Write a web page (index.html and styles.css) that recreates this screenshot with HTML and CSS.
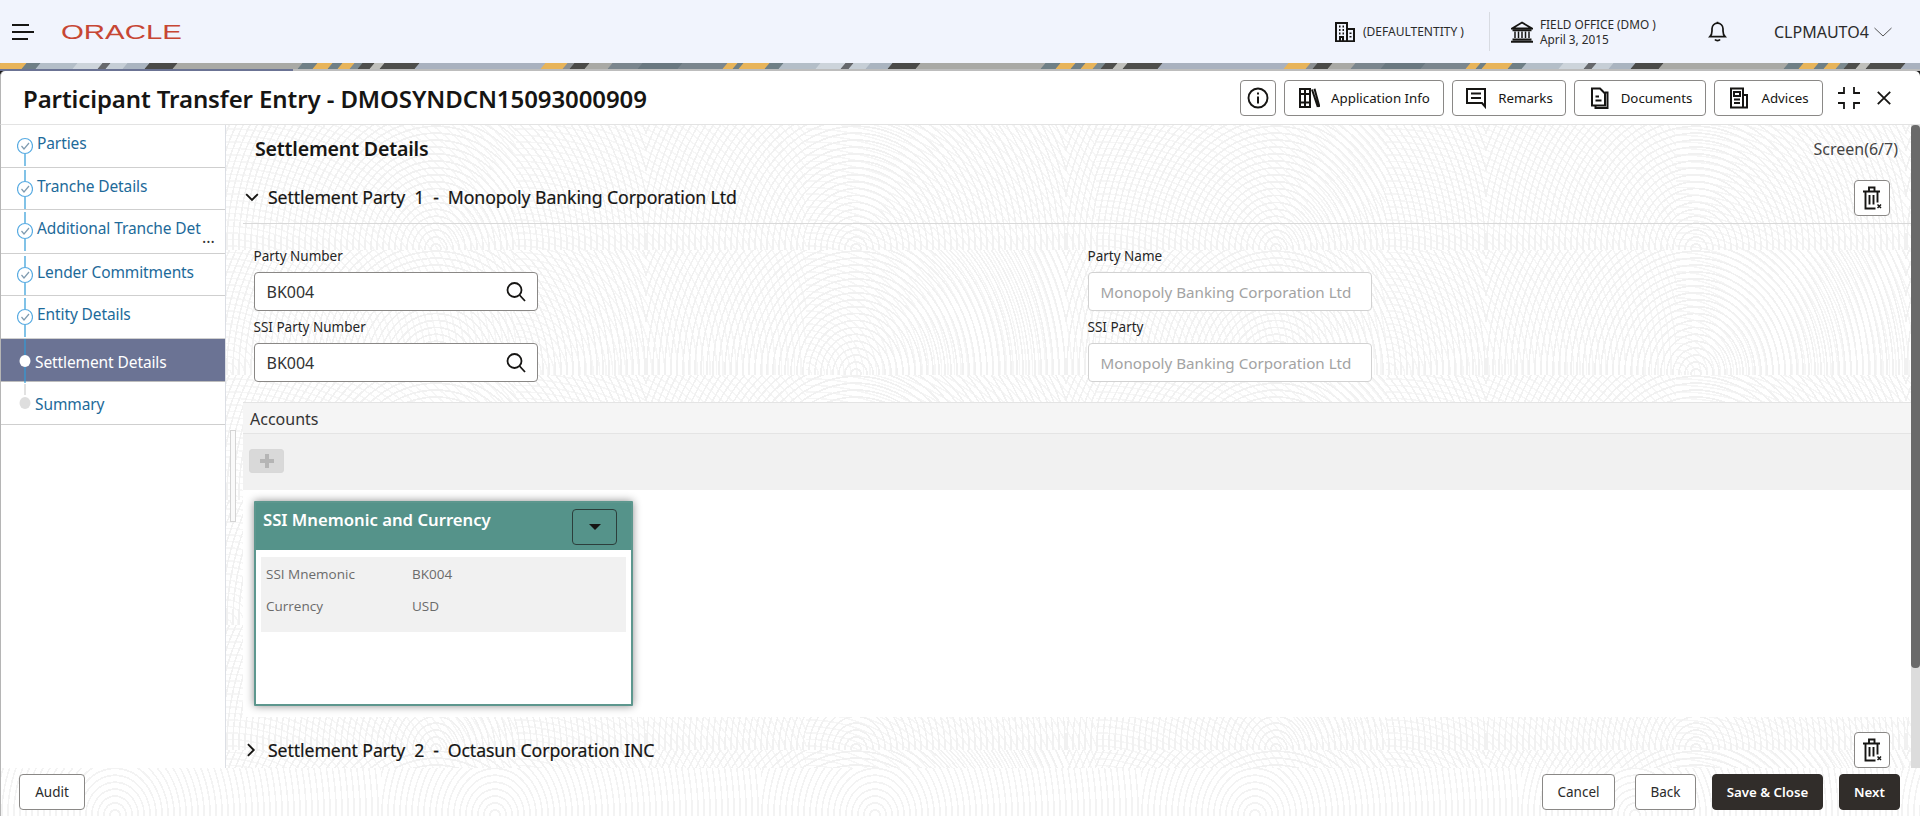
FILE: index.html
```html
<!DOCTYPE html>
<html lang="en">
<head>
<meta charset="utf-8">
<title>Participant Transfer Entry</title>
<link rel="stylesheet" href="styles.css">
</head>
<body>
<div class="app">
  <header class="topbar">
    <div class="menu-icon"><span class="l1"></span><span class="l2"></span><span class="l3"></span></div>
    <div class="logo"><span>ORACLE</span></div>
    <div class="top-right">
      <svg class="ic-building" viewBox="0 0 20 20" fill="none" stroke="#161513" stroke-width="2"><path d="M1 19.200V1h11v18.200M12 7h7v12.200M0 19.200h20"/><path d="M4 4.500h1.500M7.500 4.500H9M4 8h1.500M7.500 8H9M4 11.500h1.500M7.500 11.500H9M5 19v-4h3v4M15.500 10.500v1.500M15.500 14v1.500"/></svg>
      <span class="entity">(DEFAULTENTITY )</span>
      <span class="top-div"></span>
      <svg class="ic-bank" viewBox="0 0 22 22" fill="none" stroke="#161513" stroke-width="1.800"><path d="M1 7.500 11 1.500l10 6z" /><path d="M1.500 9.200h19M1.500 18.400h19M0 20.800h22" stroke-width="2"/><path d="M4 10.500v6.500M7.500 10.500v6.500M11 10.500v6.500M14.500 10.500v6.500M18 10.500v6.500" stroke-width="1.500"/></svg>
      <div class="office"><div>FIELD OFFICE (DMO )</div><div>April 3, 2015</div></div>
      <svg class="ic-bell" viewBox="0 0 20 22" fill="none" stroke="#161513" stroke-width="1.800"><path d="M2 16.500c1.500-1.500 2.200-3 2.200-6V8a5.800 5.800 0 0 1 11.600 0v2.500c0 3 .7 4.500 2.200 6z"/><path d="M10 2.200V.8M7.300 19.400c1.200 1.600 4.200 1.600 5.400 0" /></svg>
      <span class="user">CLPMAUTO4</span>
      <svg class="ic-chev" viewBox="0 0 18 10" fill="none" stroke="#555" stroke-width="1"><path d="M.5 1 9 9l8.500-8"/></svg>
    </div>
  </header>
  <div class="band"></div>
  <section class="dialog">
    <div class="progress"><div class="progress-fill"></div></div>
    <div class="title-row">
      <h1>Participant Transfer Entry - DMOSYNDCN15093000909</h1>
      <div class="actions">
        <button class="btn icon-only"><svg class="ic20" viewBox="0 0 22 22" fill="none" stroke="#161513" stroke-width="1.900"><circle cx="11" cy="11" r="9.500"/><path d="M11 9.500v7M11 5.500v2" stroke-width="2"/></svg></button>
        <button class="btn w-app"><svg class="ic20" viewBox="0 0 22 22" fill="none" stroke="#161513" stroke-width="2"><path d="M2 2h5v18H2zM7 2h5v18H7zM2 7h10M2 15.500h10"/><path d="M14 2.500 19.800 20M16.500 1.800 21.500 20"/></svg><span>Application Info</span></button>
        <button class="btn w-rem"><svg class="ic20" viewBox="0 0 22 22" fill="none" stroke="#161513" stroke-width="2"><path d="M2 2h18v17.500l-3-3.500H2z"/><path d="M6 6.500h10M6 11h10"/></svg><span>Remarks</span></button>
        <button class="btn w-doc"><svg class="ic20" viewBox="0 0 22 22" fill="none" stroke="#161513" stroke-width="2"><path d="M4 1.500h8l5 5v12H4z"/><path d="M17 5.500h2.500V21H7.500v-2.500M7.500 9.500H11M7.500 13.500h6"/></svg><span>Documents</span></button>
        <button class="btn w-adv"><svg class="ic20" viewBox="0 0 22 22" fill="none" stroke="#161513" stroke-width="2"><path d="M3 1.500h12v19H3zM15 8h4v12.500h-4"/><path d="M6 5h6v4H6zM6 12.500h6M6 16h6"/></svg><span>Advices</span></button>
        <svg class="ic-full" viewBox="0 0 22 22" fill="none" stroke="#161513" stroke-width="1.800"><path d="M6 0v6H0M16 0v6h6M6 22v-6H0M16 22v-6h6"/></svg>
        <svg class="ic-close" viewBox="0 0 14 14" fill="none" stroke="#161513" stroke-width="1.800"><path d="M.8.800l12.400 12.400M13.200.800.800 13.200"/></svg>
      </div>
    </div>
    <div class="body">
      <nav class="sidebar">
        <div class="step">
          <svg class="rail" viewBox="0 0 16 42"><path class="ln" d="M8 29v12"/><circle class="ring" cx="8" cy="21" r="7.500"/><path class="tick" d="m4.500 21 2.500 3 5-6"/></svg>
          <span class="step-text">Parties</span>
        </div>
        <div class="step">
          <svg class="rail" viewBox="0 0 16 42"><path class="ln" d="M8 2v11M8 29v12"/><circle class="ring" cx="8" cy="21" r="7.500"/><path class="tick" d="m4.500 21 2.500 3 5-6"/></svg>
          <span class="step-text">Tranche Details</span>
        </div>
        <div class="step tall">
          <svg class="rail" viewBox="0 0 16 42"><path class="ln" d="M8 2v11M8 29v12"/><circle class="ring" cx="8" cy="21" r="7.500"/><path class="tick" d="m4.500 21 2.500 3 5-6"/></svg>
          <span class="step-text">Additional Tranche Det</span><span class="more">...</span>
        </div>
        <div class="step">
          <svg class="rail" viewBox="0 0 16 42"><path class="ln" d="M8 2v11M8 29v12"/><circle class="ring" cx="8" cy="21" r="7.500"/><path class="tick" d="m4.500 21 2.500 3 5-6"/></svg>
          <span class="step-text">Lender Commitments</span>
        </div>
        <div class="step">
          <svg class="rail" viewBox="0 0 16 42"><path class="ln" d="M8 2v11M8 29v12"/><circle class="ring" cx="8" cy="21" r="7.500"/><path class="tick" d="m4.500 21 2.500 3 5-6"/></svg>
          <span class="step-text">Entity Details</span>
        </div>
        <div class="step active">
          <svg class="rail" viewBox="0 0 16 44"><path class="ln" d="M8 0v44"/><ellipse cx="8" cy="22" rx="5.500" ry="6" fill="#fff"/></svg>
          <span class="step-text">Settlement Details</span>
        </div>
        <div class="step last">
          <svg class="rail" viewBox="0 0 16 42"><path class="ln grey" d="M8 2v11"/><ellipse cx="8" cy="21" rx="5.500" ry="6" fill="#dedede"/></svg>
          <span class="step-text">Summary</span>
        </div>
      </nav>
      <main class="main">
        <div class="content">
          <div class="splitter"></div>
          <div class="section-head">
            <h2>Settlement Details</h2>
            <span class="screen-no">Screen(6/7)</span>
          </div>
          <div class="party-head open">
            <svg class="chev" viewBox="0 0 12 12" fill="none" stroke="#161513" stroke-width="1.600"><path d="m1 3.500 5 5 5-5"/></svg>
            <span class="party-title">Settlement Party&nbsp; 1&nbsp; -&nbsp; Monopoly Banking Corporation Ltd</span>
            <button class="btn trash"><svg class="ic-trash" viewBox="0 0 20 24" fill="none" stroke="#161513" stroke-width="1.900"><path d="M1 5.500h17M7 5.500V1.500h5.500v4M3.500 5.500v17h10M15.500 5.500v11M7.500 9v9.500M11.500 9v9.500"/><path d="m15.500 18.500 3.500 3.500M19 18.500 15.500 22" stroke-width="1.500"/></svg></button>
          </div>
          <form class="form">
            <div class="col">
              <label>Party Number</label>
              <div class="input"><span>BK004</span><svg class="ic-search" viewBox="0 0 20 20" fill="none" stroke="#161513" stroke-width="1.800"><circle cx="8.500" cy="8" r="7"/><path d="m13.500 13 5.500 6"/></svg></div>
              <label>SSI Party Number</label>
              <div class="input"><span>BK004</span><svg class="ic-search" viewBox="0 0 20 20" fill="none" stroke="#161513" stroke-width="1.800"><circle cx="8.500" cy="8" r="7"/><path d="m13.500 13 5.500 6"/></svg></div>
            </div>
            <div class="col">
              <label>Party Name</label>
              <div class="input disabled"><span>Monopoly Banking Corporation Ltd</span></div>
              <label>SSI Party</label>
              <div class="input disabled"><span>Monopoly Banking Corporation Ltd</span></div>
            </div>
          </form>
          <div class="accounts-head">Accounts</div>
          <div class="accounts-tools"><button class="add-btn"><svg viewBox="0 0 14 14" fill="#b5b5b5"><path d="M5 0h4v5h5v4H9v5H5V9H0V5h5z"/></svg></button></div>
          <div class="cards">
            <article class="card">
              <div class="card-head">
                <h3>SSI Mnemonic and Currency</h3>
                <button class="card-menu"><svg viewBox="0 0 12 6" fill="#161513"><path d="M0 0h12L6 6z"/></svg></button>
              </div>
              <dl class="card-body">
                <div class="kv"><dt>SSI Mnemonic</dt><dd>BK004</dd></div>
                <div class="kv"><dt>Currency</dt><dd>USD</dd></div>
              </dl>
            </article>
          </div>
          <div class="party-head closed">
            <svg class="chev" viewBox="0 0 12 12" fill="none" stroke="#161513" stroke-width="1.600"><path d="m2.500 1 5 5-5 5"/></svg>
            <span class="party-title">Settlement Party&nbsp; 2&nbsp; -&nbsp; Octasun Corporation INC</span>
            <button class="btn trash"><svg class="ic-trash" viewBox="0 0 20 24" fill="none" stroke="#161513" stroke-width="1.900"><path d="M1 5.500h17M7 5.500V1.500h5.500v4M3.500 5.500v17h10M15.500 5.500v11M7.500 9v9.500M11.500 9v9.500"/><path d="m15.500 18.500 3.500 3.500M19 18.500 15.500 22" stroke-width="1.500"/></svg></button>
          </div>
        </div>
        <div class="scrollbar"><div class="thumb"></div></div>
      </main>
    </div>
    <footer class="footer">
      <button class="fbtn audit">Audit</button>
      <div class="spacer"></div>
      <button class="fbtn cancel">Cancel</button>
      <button class="fbtn back">Back</button>
      <button class="fbtn dark save">Save &amp; Close</button>
      <button class="fbtn dark next">Next</button>
    </footer>
  </section>
</div>
</body>
</html>
```
FILE: styles.css
```css
* { box-sizing: border-box; }
html, body { margin: 0; height: 100%; overflow: hidden; }
body { font-family: "Noto Sans", "Open Sans", sans-serif; color: #161513; background: #fff; }
button { font-family: inherit; cursor: pointer; }
.app { width: 1920px; height: 816px; display: flex; flex-direction: column; overflow: hidden; }

/* top bar */
.topbar { height: 63px; flex: none; background: #f1f4fd; display: flex; align-items: center; padding-left: 12px; }
.menu-icon { width: 22px; height: 16px; display: flex; flex-direction: column; justify-content: space-between; }
.menu-icon span { display: block; height: 2px; background: #161513; }
.menu-icon .l1 { width: 17px; }
.menu-icon .l2 { width: 22px; }
.menu-icon .l3 { width: 16px; }
.logo { margin-left: 27px; width: 120px; display: flex; justify-content: flex-start; }
.logo span { display: inline-block; font-family: "Liberation Sans", sans-serif; font-size: 21px; line-height: 21px; color: #c74634; transform: scaleX(1.4); transform-origin: left center; }
.top-right { margin-left: auto; display: flex; align-items: center; height: 100%; padding-right: 28px; }
.ic-building { width: 20px; height: 20px; }
.entity { font-size: 12px; margin-left: 8px; width: 126px; color: #2b2b2b; }
.top-div { width: 1px; height: 39px; background: #d8dbe2; }
.ic-bank { width: 22px; height: 22px; margin-left: 21px; }
.office { margin-left: 7px; width: 168px; font-size: 11.800px; line-height: 15px; color: #2b2b2b; }
.ic-bell { width: 19px; height: 21px; }
.user { margin-left: 47px; font-size: 16px; color: #2b2b2b; width: 100px; }
.ic-chev { width: 18px; height: 10px; }

.band { height: 6px; flex: none; overflow: hidden; position: relative; }
.band::before { content: ""; position: absolute; left: -20px; right: -20px; top: 0; bottom: 0; transform: skewX(-40deg); background-size: 743px 6px; background-position: 20px 0; background-repeat: repeat-x; background-image: linear-gradient(90deg, #e8b45a 0 24px, #6f7f86 24px 38px, #b4bec8 38px 75px, #cdd4db 75px 100px, #66686c 100px 108px, #c6ced6 108px 125px, #aab4c0 125px 147px, #4a4a48 147px 175px, #a9a9a5 175px 300px, #6f7f86 300px 315px, #e8b45a 315px 330px, #6f7f86 330px 340px, #e8b45a 340px 352px, #7c8a90 352px 360px, #4e4e4c 360px 372px, #c0c0bc 372px 382px, #4e4e4c 382px 417px, #a9b1bf 417px 543px, #e8b45a 543px 565px, #8b8f92 565px 572px, #4a4a48 572px 587px, #a9a9a5 587px 610px, #7b868e 610px 640px, #6a7880 640px 680px, #7b868e 680px 725px, #e8b45a 725px 735px, #6f7f86 735px 741px, #e8b45a 741px 743px); }

/* dialog */
.dialog { flex: 1; min-height: 0; display: flex; flex-direction: column; background: #1c1c1c; position: relative; }
.progress { height: 2px; flex: none; background: #bdbdbd; }
.progress-fill { width: 293px; height: 2px; background: #6b7394; }
.title-row { height: 53px; flex: none; background: #fff; border-radius: 5px 5px 0 0; border-left: 1px solid #b5b5b5; display: flex; align-items: flex-start; padding-left: 22px; padding-right: 29px; }
.title-row h1 { margin: 0; font-size: 24px; line-height: 56px; font-weight: 600; letter-spacing: -.1px; white-space: nowrap; }
.actions { margin-left: auto; display: flex; align-items: center; gap: 8px; padding-top: 9px; }
.btn { height: 36px; background: #fff; border: 1px solid #8a8886; border-radius: 4px; display: inline-flex; align-items: center; justify-content: center; gap: 11px; font-size: 13.300px; color: #161513; padding: 0; }
.icon-only { width: 36px; }
.ic20 { width: 22px; height: 22px; flex: none; }
.w-app { width: 160px; }
.w-rem { width: 114px; }
.w-doc { width: 132px; }
.w-adv { width: 109px; }
.ic-full { width: 22px; height: 22px; margin-left: 7px; }
.ic-close { width: 14px; height: 14px; margin-left: 9px; }

.body { flex: 1; min-height: 0; display: flex; background: #fff; border-top: 1px solid #e3e3e3; border-left: 1px solid #b5b5b5; }
.sidebar { width: 225px; flex: none; background: #fff; border-right: 1px solid #dcdfe5; }
.step { height: 42.500px; border-bottom: 1px solid #cfcfcf; display: flex; position: relative; padding-left: 16px; }
.step.tall { height: 43.500px; }
.step.active { height: 43.500px; background: #6b7394; border-bottom-color: #bdbdbd; padding-left: 16px; }
.step.last { height: 43px; }
.rail { width: 16px; height: 42px; flex: none; }
.step.active .rail { height: 44px; }
.ln { stroke: #2f9bd8; stroke-width: 1.200; fill: none; }
.ln.grey { stroke: #cfcfcf; }
.ring { fill: #fff; stroke: #58abe2; stroke-width: 1.200; }
.tick { fill: none; stroke: #7f9bb0; stroke-width: 1.200; }
.step-text { font-size: 15.500px; line-height: 20px; color: #1d6a9a; margin-left: 4px; padding-top: 8px; white-space: nowrap; letter-spacing: -.1px; }
.step.active .step-text { color: #fff; padding-top: 13px; margin-left: 2px; line-height: 20px; }
.step.last .step-text { padding-top: 12px; margin-left: 2px; }
.more { position: absolute; left: 201px; top: 17px; font-size: 16px; line-height: 20px; color: #333; }

.main { flex: 1; min-width: 0; display: flex; }
.content { flex: 1; min-width: 0; padding-left: 17px; overflow: hidden; position: relative; background-color: #fff; background-image: repeating-radial-gradient(ellipse 130px 150px at 50% 100%, transparent 0 4.500px, #f1f1f1 4.500px 6px), repeating-radial-gradient(circle at 0 100%, transparent 0 5px, #f6f6f6 5px 6.500px); background-size: 420px 125px, 290px 250px; }
.splitter { position: absolute; left: 4px; top: 305px; width: 6px; height: 92px; border: 1px solid #d4d4d4; background: #fafafa; }
.section-head { height: 47px; display: flex; align-items: center; padding-left: 12px; padding-right: 13px; }
.section-head h2 { margin: 0; font-size: 19.600px; line-height: 42px; font-weight: 600; letter-spacing: -.2px; }
.screen-no { margin-left: auto; font-size: 16px; color: #444; }
.party-head { display: flex; align-items: center; padding-right: 21px; }
.party-head.open { height: 52px; border-bottom: 1px solid #d9d9d9; }
.party-head.closed { height: 66px; }
.chev { width: 14px; height: 14px; margin-left: 2px; }
.party-title { margin-left: 9px; font-size: 17.700px; font-weight: 400; white-space: nowrap; letter-spacing: -.1px; -webkit-text-stroke: .2px #161513; }
.party-head.open .party-title { margin-bottom: 2px; }
.party-head.open .chev { margin-bottom: 2px; }
.trash { margin-left: auto; width: 36px; }
.ic-trash { width: 20px; height: 24px; }
.form { height: 178px; display: flex; padding-left: 10.500px; padding-top: 22px; }
.col { width: 834px; flex: none; }
.col label { display: block; font-size: 13.500px; line-height: 20px; color: #252525; font-weight: 400; }
.input { width: 284px; height: 39px; margin-top: 6px; margin-bottom: 6px; border: 1px solid #8a8886; border-radius: 4px; background: #fff; display: flex; align-items: center; padding-left: 12px; padding-right: 11px; font-size: 16px; color: #333; }
.input.disabled { border-color: #d2d2d2; color: #a3a3a3; background: #fff; font-size: 15.200px; }
.input span { white-space: nowrap; }
.ic-search { width: 20px; height: 20px; margin-left: auto; }
.accounts-head { height: 32px; background: #f5f5f5; border-top: 1px solid #e4e4e4; border-bottom: 1px solid #e4e4e4; padding-left: 7px; font-size: 16px; line-height: 32px; color: #333; }
.accounts-tools { height: 56px; background: #f1f1f1; padding: 15px 6px; }
.add-btn { width: 35px; height: 24px; padding: 0; border: 1px solid #d8d8d8; border-radius: 3px; background: #d9d9d9; display: flex; align-items: center; justify-content: center; }
.add-btn svg { width: 14px; height: 14px; }
.cards { height: 227px; background: #fff; padding: 11px 0 0 11px; }
.card { width: 379px; height: 205px; border: 2px solid #5d978e; border-radius: 1px; background: #fff; box-shadow: 0 0 9px rgba(0,0,0,.45); }
.card-head { height: 47px; background: #55938a; display: flex; align-items: flex-start; padding: 0 14px 0 7px; }
.card-head h3 { margin: 0; color: #fff; font-size: 16.700px; line-height: 34px; font-weight: 600; white-space: nowrap; }
.card-menu { margin-left: auto; margin-top: 6px; width: 45px; height: 36px; background: transparent; border: 1px solid #2c3e3b; border-radius: 4px; padding: 0; display: flex; align-items: center; justify-content: center; }
.card-menu svg { width: 12px; height: 6px; }
.card-body { margin: 7px 5px 0; height: 75px; background: #f1f1f1; padding: 1px 5px; }
.kv { display: flex; height: 32px; align-items: center; font-size: 13.500px; color: #6b6b6b; }
.kv dt { width: 146px; font-family: "Open Sans", sans-serif; }
.kv dd { margin: 0; font-family: "Open Sans", sans-serif; }
.scrollbar { width: 9px; flex: none; background: #dcdcdc; }
.thumb { height: 543px; background: #6a6a6a; border-radius: 4px; }

.footer { height: 48px; flex: none; background-color: #fff; background-image: repeating-radial-gradient(ellipse 130px 150px at 30% 100%, transparent 0 4.500px, #f3f3f3 4.500px 6px); background-size: 380px 48px; display: flex; align-items: center; padding: 0 20px 0 18px; gap: 20px; border-left: 1px solid #b5b5b5; }
.spacer { flex: 1; }
.fbtn { height: 36px; background: #fff; border: 1px solid #8a8886; border-radius: 4px; font-size: 13.500px; color: #2b2b2b; padding: 0; }
.audit { width: 66px; }
.cancel { width: 73px; }
.back { width: 61px; }
.dark { background: #312d2a; border-color: #312d2a; color: #fff; font-weight: 600; font-size: 13.300px; }
.save { width: 111px; margin-left: -4px; }
.next { width: 61px; margin-left: -4px; }
```
